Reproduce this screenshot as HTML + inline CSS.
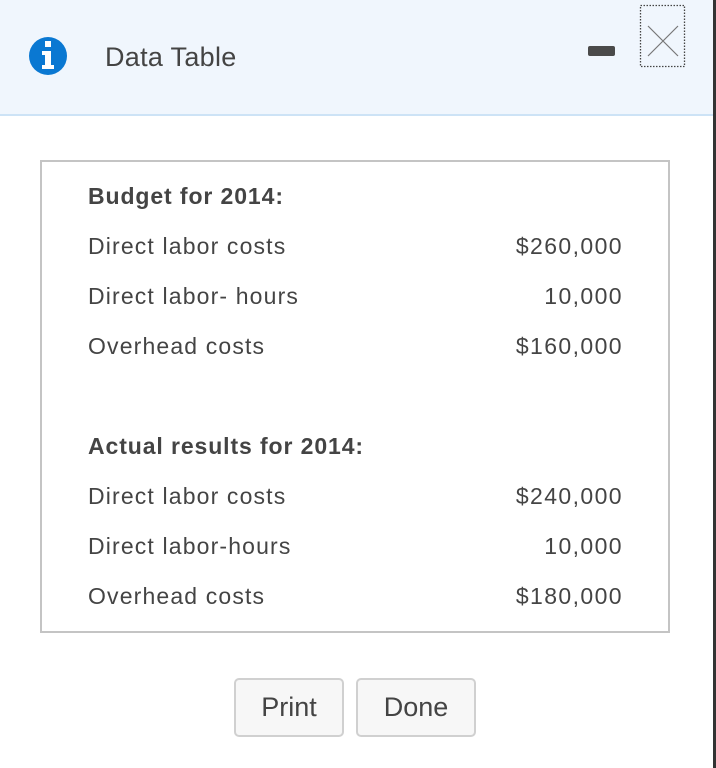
<!DOCTYPE html>
<html><head><meta charset="utf-8"><style>
*{margin:0;padding:0;box-sizing:border-box}
body{width:716px;height:768px;position:relative;background:#fff;font-family:"Liberation Sans",Arial,sans-serif;color:#444;overflow:hidden}
.hdr{position:absolute;left:0;top:0;width:713px;height:116px;background:#f0f6fd;border-bottom:2px solid #cde3f6}
.rb{position:absolute;right:0;top:0;width:3px;height:768px;background:#333}
.t{position:absolute;font-size:23px;line-height:22px;white-space:nowrap;letter-spacing:1.15px}
.r{right:93px;text-align:right;letter-spacing:1.4px}
.b{font-weight:bold;letter-spacing:0.9px}
.box{position:absolute;left:40px;top:160px;width:630px;height:473px;border:2px solid #c4c4c4}
.btn{position:absolute;top:678px;height:59px;border:2px solid #d0d0d0;border-radius:5px;background:#f7f7f7;font-size:27px;line-height:55px;text-align:center;color:#444}
</style></head><body>
<div class="hdr"></div>
<div class="rb"></div>
<svg style="position:absolute;left:0;top:0" width="713" height="115">
<circle cx="48" cy="56" r="19" fill="#0a78d2"/>
<rect x="45" y="41" width="6" height="6" fill="#fff"/>
<path d="M42 51h9v14h3v4H42v-4h3v-10h-3z" fill="#fff"/>
<rect x="588" y="46" width="27" height="10" rx="2" fill="#4a4a4a"/>
<rect x="640.5" y="5.5" width="44" height="61" fill="none" stroke="#444" stroke-width="1.3" stroke-dasharray="1.5 1.5"/>
<path d="M648 26L678 56M678 26L648 56" stroke="#777" stroke-width="1.2"/>
</svg>
<div class="t" style="left:105px;top:44px;font-size:27px;line-height:27px;letter-spacing:0.3px">Data Table</div>
<div class="box"></div>
<div class="t b" style="left:88px;top:185px">Budget for 2014:</div>
<div class="t" style="left:88px;top:235px">Direct labor costs</div>
<div class="t r" style="top:235px">$260,000</div>
<div class="t" style="left:88px;top:285px">Direct labor- hours</div>
<div class="t r" style="top:285px">10,000</div>
<div class="t" style="left:88px;top:335px">Overhead costs</div>
<div class="t r" style="top:335px">$160,000</div>
<div class="t b" style="left:88px;top:435px">Actual results for 2014:</div>
<div class="t" style="left:88px;top:485px">Direct labor costs</div>
<div class="t r" style="top:485px">$240,000</div>
<div class="t" style="left:88px;top:535px">Direct labor-hours</div>
<div class="t r" style="top:535px">10,000</div>
<div class="t" style="left:88px;top:585px">Overhead costs</div>
<div class="t r" style="top:585px">$180,000</div>
<div class="btn" style="left:234px;width:110px">Print</div>
<div class="btn" style="left:356px;width:120px">Done</div>
</body></html>
